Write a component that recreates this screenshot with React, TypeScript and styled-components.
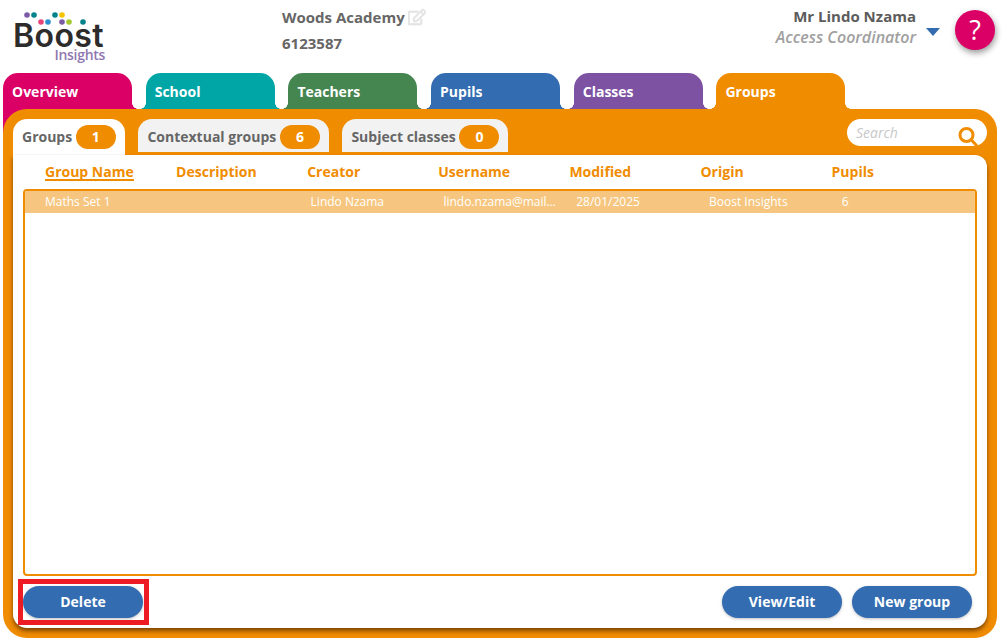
import React from 'react'
import styled, { createGlobalStyle } from 'styled-components'
import { FaRegEdit } from 'react-icons/fa'

const GlobalStyle = createGlobalStyle`
  html, body {
    margin: 0;
    padding: 0;
    background: #fff;
    font-family: "Open Sans", "Liberation Sans", sans-serif;
  }
  * { box-sizing: border-box; }
`

const ORANGE = '#f08c00'
const BLUE = '#336cb0'

const Page = styled.div`
  width: 1004px;
  height: 644px;
  padding: 0 7px 0 3px;
  overflow: hidden;
`

const Header = styled.header`
  height: 73px;
  display: flex;
`

const Logo = styled.div`
  width: 279px;
  padding: 11px 0 0 10px;
  display: flex;
  flex-direction: column;
`

const LogoDots = styled.svg`
  display: block;
  width: 100px;
  height: 14px;
  margin-bottom: -1px;
`

const LogoWord = styled.span`
  font-family: Inter, "Open Sans", sans-serif;
  font-size: 32px;
  line-height: 23px;
  font-weight: 600;
  letter-spacing: 0.4px;
  color: #2c2c2c;
`

const LogoSub = styled.span`
  width: 92px;
  margin-top: 1px;
  text-align: right;
  font-size: 14px;
  line-height: 14px;
  font-weight: 600;
  letter-spacing: -0.3px;
  color: #8f78b0;
`

const School = styled.div`
  padding-top: 4px;
  font-size: 15px;
  line-height: 26px;
  font-weight: 700;
  color: #666;
`

const SchoolName = styled.div`
  display: flex;
  align-items: center;
  gap: 3px;
  svg {
    color: #e4e4e4;
    font-size: 18px;
    stroke: currentColor;
    stroke-width: 24px;
  }
`

const Account = styled.div`
  margin-left: auto;
  margin-right: 2px;
  display: flex;
`

const UserText = styled.div`
  padding-top: 6px;
  text-align: right;
  line-height: 21px;
`

const UserName = styled.div`
  font-size: 15px;
  font-weight: 700;
  color: #5c5c5c;
`

const UserRole = styled.div`
  font-size: 16px;
  font-style: italic;
  font-weight: 600;
  color: #a0a0a0;
`

const Caret = styled.span`
  width: 0;
  height: 0;
  margin: 28px 15px 0 10px;
  border-left: 7.5px solid transparent;
  border-right: 7.5px solid transparent;
  border-top: 8px solid ${BLUE};
`

const HelpButton = styled.button`
  width: 40px;
  height: 40px;
  margin-top: 10px;
  padding: 0;
  border: 0;
  border-radius: 50%;
  background: #da0066;
  color: #fff;
  font: 400 27px/40px "Open Sans", sans-serif;
  box-shadow: 1px 3px 6px rgba(0, 0, 0, 0.4);
`

const TabBar = styled.nav`
  display: flex;
  gap: 13.7px;
  height: 36px;
`

const Tab = styled.div<{ $color: string; $first?: boolean }>`
  position: relative;
  width: 129px;
  height: 36px;
  padding: 9px 0 0 9px;
  border-radius: 15px 15px 0 0;
  background: ${(p) => p.$color};
  color: #fff;
  font-size: 14px;
  line-height: 20px;
  font-weight: 700;

  &::before,
  &::after {
    content: '';
    position: absolute;
    bottom: 0;
    width: 6px;
    height: 6px;
  }
  &::before {
    left: -6px;
    background: ${(p) => (p.$first ? 'transparent' : `radial-gradient(circle at 0 0, transparent 5.6px, ${p.$color} 6px)`)};
  }
  &::after {
    right: -6px;
    background: radial-gradient(circle at 100% 0, transparent 5.6px, ${(p) => p.$color} 6px);
  }
`

const OverviewCorner = styled.span`
  position: absolute;
  left: 0;
  top: 36px;
  width: 26px;
  height: 26px;
  background: #da0066;
`

const Panel = styled.main`
  position: relative;
  height: 529px;
  padding: 10px 10px 10px;
  border-radius: 24px 22px 22px 24px;
  background: ${ORANGE};
  display: flex;
  flex-direction: column;
`

const SubBar = styled.div`
  height: 36px;
  display: flex;
  align-items: flex-start;
  gap: 13.5px;
`

const SubTab = styled.div<{ $active?: boolean }>`
  height: ${(p) => (p.$active ? '36px' : '33px')};
  padding: 6px 9px 0 9px;
  display: flex;
  gap: 3.7px;
  border-radius: 14px 14px 0 0;
  background: ${(p) => (p.$active ? '#fff' : '#f2f2f2')};
  color: #666;
  font-size: 14px;
  line-height: 24px;
  font-weight: 700;
`

const Badge = styled.span`
  width: 40px;
  height: 24px;
  border-radius: 12px;
  background: ${ORANGE};
  color: #fff;
  text-align: center;
  font-size: 14px;
  line-height: 24px;
`

const Search = styled.div`
  margin-left: auto;
  width: 140px;
  height: 27px;
  padding: 0 8px 0 9px;
  display: flex;
  align-items: center;
  justify-content: space-between;
  border-radius: 14px;
  background: #fff;
  color: #c8c8c8;
  font-size: 14px;
  font-style: italic;

  svg {
    margin-top: 6px;
  }
`

const Content = styled.section`
  flex: 1;
  padding: 0 10px 10px;
  display: flex;
  flex-direction: column;
  border-radius: 0 12px 14px 14px;
  background: #fff;
  box-shadow: 0 3px 4px rgba(90, 45, 0, 0.75);
`

const HeadRow = styled.div`
  height: 34px;
  padding: 7px 0 0 22px;
  display: grid;
  grid-template-columns: repeat(7, 131.1px);
`

const HeadCell = styled.div<{ $sorted?: boolean }>`
  justify-self: start;
  height: 19px;
  color: ${ORANGE};
  font-size: 14px;
  line-height: 20px;
  font-weight: 700;
  border-bottom: ${(p) => (p.$sorted ? `2px solid ${ORANGE}` : '0')};
`

const List = styled.div`
  flex: 1;
  border: 2px solid ${ORANGE};
  border-radius: 4px;
`

const Row = styled.div`
  height: 22px;
  padding-left: 20px;
  display: grid;
  grid-template-columns: repeat(7, 132.8px);
  background: #f6c680;
  color: #fff;
  font-size: 12px;
  line-height: 22px;
`

const Cell = styled.div`
  width: 114px;
  white-space: nowrap;
  overflow: hidden;
  text-overflow: ellipsis;
`

const Footer = styled.div`
  padding-top: 10px;
  display: flex;
  justify-content: space-between;
`

const ButtonGroup = styled.div`
  display: flex;
  gap: 10px;
  padding-right: 5px;
`

const ActionButton = styled.button`
  width: 120px;
  height: 32px;
  padding: 0;
  border: 0;
  border-radius: 16px;
  background: ${BLUE};
  color: #fff;
  font: 700 14px/32px "Open Sans", sans-serif;
  box-shadow: 0 1px 3px rgba(0, 0, 0, 0.25);
`

const Highlighted = styled.div`
  position: relative;
  &::after {
    content: '';
    position: absolute;
    top: -7px;
    left: -5px;
    right: -6px;
    bottom: -7px;
    border: 5px solid #ed1c24;
  }
`

const dots: [number, number, string][] = [
  [14, 4, '#7b5aa6'],
  [21, 4, '#00838a'],
  [28, 11, '#e8457b'],
  [35, 11, '#2f8fd0'],
  [42, 4, '#00838a'],
  [49, 4, '#f5c400'],
  [49, 11, '#7b5aa6'],
  [56, 11, '#a5c82e'],
  [70, 11, '#00838a'],
]

const tabs = [
  { label: 'Overview', color: '#da0066' },
  { label: 'School', color: '#00a6a6' },
  { label: 'Teachers', color: '#458550' },
  { label: 'Pupils', color: BLUE },
  { label: 'Classes', color: '#7d52a3' },
  { label: 'Groups', color: ORANGE },
]

const subTabs = [
  { label: 'Groups', count: 1, active: true },
  { label: 'Contextual groups', count: 6 },
  { label: 'Subject classes', count: 0 },
]

const columns = ['Group Name', 'Description', 'Creator', 'Username', 'Modified', 'Origin', 'Pupils']

const group = ['Maths Set 1', '', 'Lindo Nzama', 'lindo.nzama@mail.com', '28/01/2025', 'Boost Insights', '6']

const App: React.FC = () => (
  <Page>
    <GlobalStyle />
    <Header>
      <Logo>
        <LogoDots viewBox="0 0 100 14">
          {dots.map(([cx, cy, fill]) => (
            <circle key={`${cx}-${cy}`} cx={cx} cy={cy} r={2.8} fill={fill} />
          ))}
        </LogoDots>
        <LogoWord>Boost</LogoWord>
        <LogoSub>Insights</LogoSub>
      </Logo>
      <School>
        <SchoolName>
          Woods Academy <FaRegEdit />
        </SchoolName>
        <div>6123587</div>
      </School>
      <Account>
        <UserText>
          <UserName>Mr Lindo Nzama</UserName>
          <UserRole>Access Coordinator</UserRole>
        </UserText>
        <Caret />
        <HelpButton>?</HelpButton>
      </Account>
    </Header>
    <TabBar>
      {tabs.map((tab, i) => (
        <Tab key={tab.label} $color={tab.color} $first={i === 0}>
          {i === 0 && <OverviewCorner />}
          {tab.label}
        </Tab>
      ))}
    </TabBar>
    <Panel>
      <SubBar>
        {subTabs.map((sub) => (
          <SubTab key={sub.label} $active={sub.active}>
            {sub.label}
            <Badge>{sub.count}</Badge>
          </SubTab>
        ))}
        <Search>
          Search
          <svg width="22" height="22" viewBox="0 0 22 22" fill="none" stroke={ORANGE}>
            <circle cx="9.5" cy="10" r="6.5" strokeWidth="3" />
            <path d="M14.5 15 L20 21" strokeWidth="3" />
          </svg>
        </Search>
      </SubBar>
      <Content>
        <HeadRow>
          {columns.map((col, i) => (
            <HeadCell key={col} $sorted={i === 0}>
              {col}
            </HeadCell>
          ))}
        </HeadRow>
        <List>
          <Row>
            {group.map((value, i) => (
              <Cell key={i}>{value}</Cell>
            ))}
          </Row>
        </List>
        <Footer>
          <Highlighted>
            <ActionButton>Delete</ActionButton>
          </Highlighted>
          <ButtonGroup>
            <ActionButton>View/Edit</ActionButton>
            <ActionButton>New group</ActionButton>
          </ButtonGroup>
        </Footer>
      </Content>
    </Panel>
  </Page>
)

export default App
